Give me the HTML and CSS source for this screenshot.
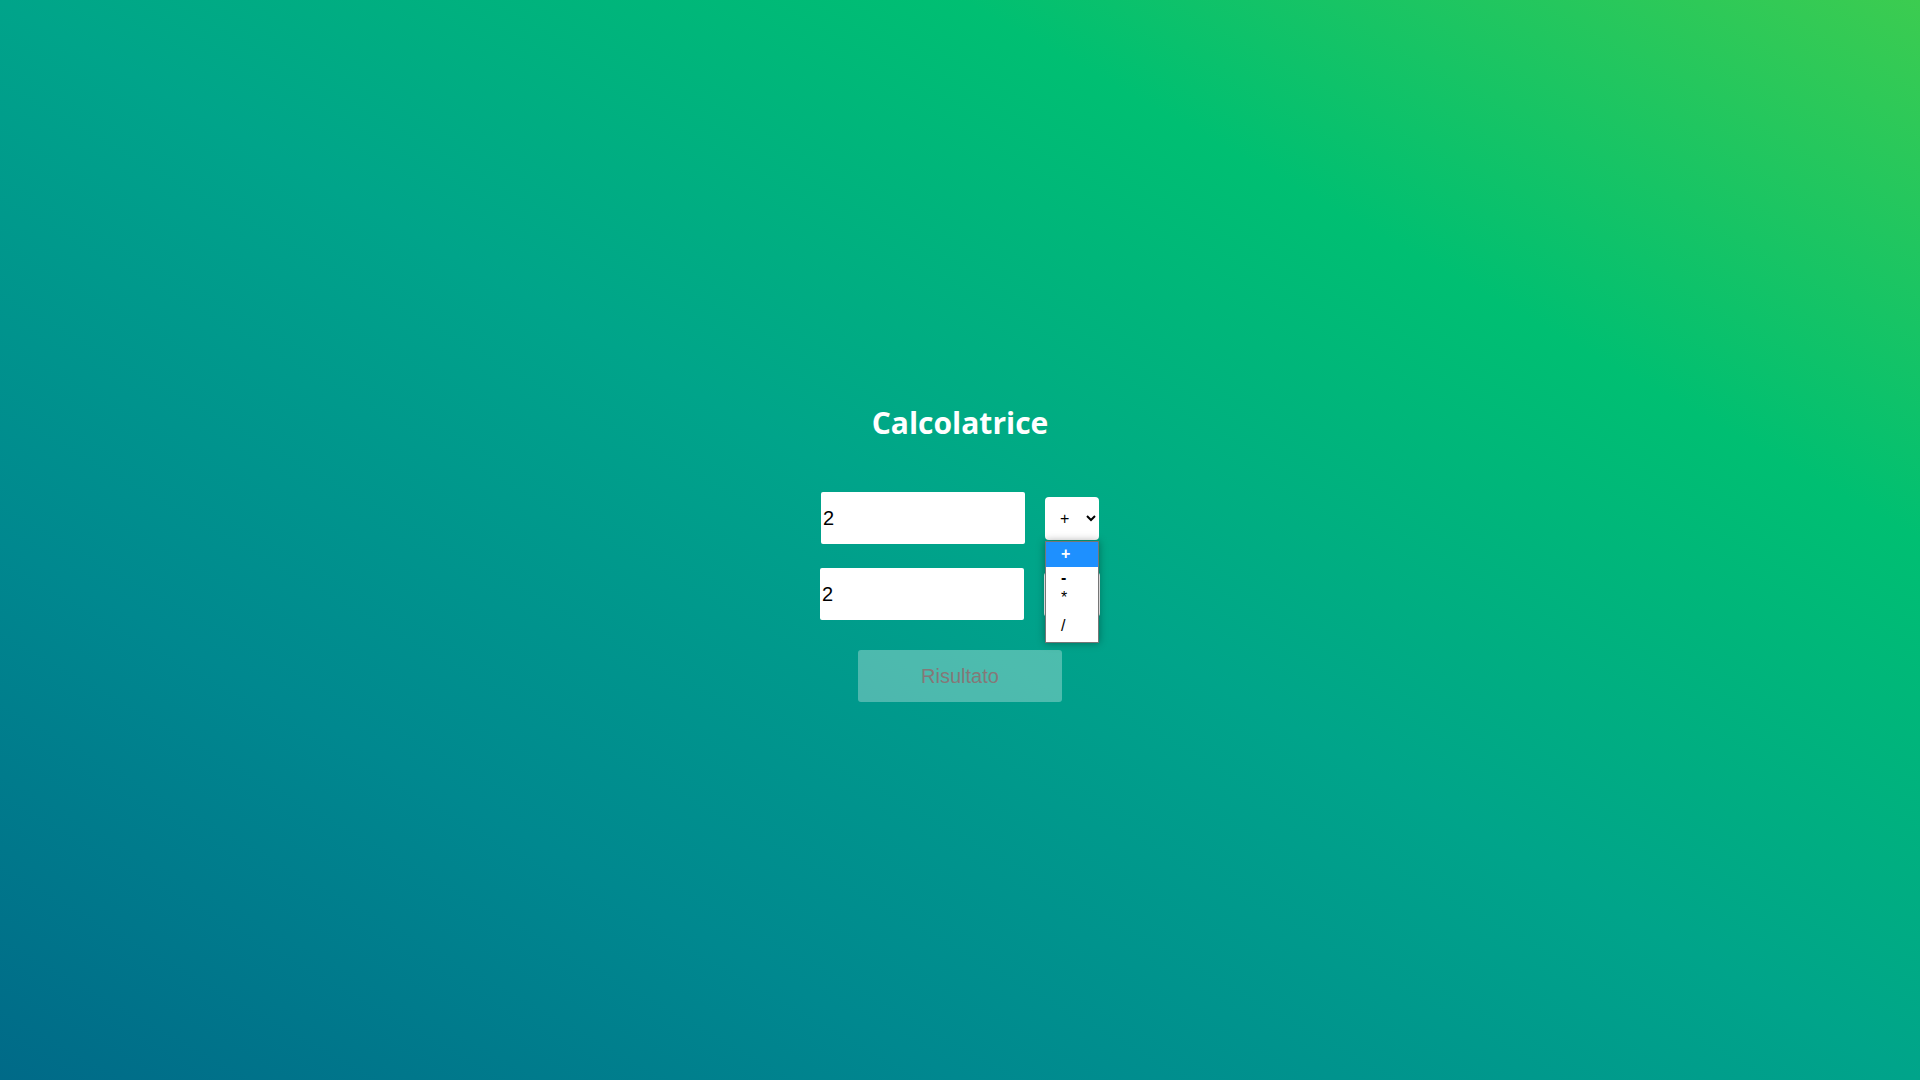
FILE: index.html
```html
<!DOCTYPE html>
<html lang="it">
<head>
<meta charset="utf-8">
<title>Calcolatrice</title>
<link rel="stylesheet" href="styles.css">
</head>
<body>
<main class="calc">
  <h1 class="title">Calcolatrice</h1>
  <form class="form">
    <div class="row">
      <input class="num" type="text" value="2">
      <div class="select-wrap">
        <select class="op">
          <option>+</option>
          <option>-</option>
          <option>*</option>
          <option>/</option>
        </select>
        <ul class="dropdown">
          <li class="opt opt-1 active">+</li>
          <li class="opt opt-2">-</li>
          <li class="opt opt-3">*</li>
          <li class="opt opt-4">/</li>
        </ul>
      </div>
    </div>
    <div class="row">
      <input class="num" type="text" value="2">
      <div class="select-wrap">
        <select class="op op-tall">
          <option>+</option>
          <option>-</option>
          <option>*</option>
          <option>/</option>
        </select>
      </div>
    </div>
    <button class="btn" type="button">Risultato</button>
  </form>
</main>
</body>
</html>
```
FILE: styles.css
```css
html, body {
  height: 100%;
}
body {
  margin: 0;
  background: linear-gradient(to right top, #006a88 0%, #00888f 25%, #00a48a 50%, #00bf72 75%, #3ccc50 100%);
  font-family: Arial, "Liberation Sans", sans-serif;
}
.calc {
  display: flex;
  flex-direction: column;
  align-items: center;
  padding-top: 403px;
}
.title {
  margin: 0;
  font-family: "Open Sans", "Noto Sans", sans-serif;
  font-weight: 700;
  font-size: 30px;
  line-height: 40px;
  color: #ffffff;
}
.form {
  margin-top: 49px;
  display: flex;
  flex-direction: column;
  align-items: center;
}
.row {
  display: flex;
  align-items: center;
  gap: 20px;
  margin-bottom: 24px;
}
.row:nth-child(2) {
  margin-bottom: 30px;
}
.num {
  box-sizing: border-box;
  width: 204px;
  height: 52px;
  border: none;
  border-radius: 2px;
  padding: 0 2px;
  background: #ffffff;
  color: #000000;
  font-family: Arial, "Liberation Sans", sans-serif;
  font-size: 20px;
  outline: none;
}
.select-wrap {
  position: relative;
  display: flex;
}
.op {
  box-sizing: border-box;
  width: 54px;
  height: 43px;
  border: none;
  border-radius: 4px;
  background: #ffffff;
  color: #000000;
  font-family: Arial, "Liberation Sans", sans-serif;
  font-size: 16px;
  padding: 0 0 0 11px;
  outline: none;
}
.op-tall {
  width: 56px;
  height: 45px;
}
.dropdown {
  position: absolute;
  top: 44px;
  left: 0;
  z-index: 5;
  box-sizing: border-box;
  width: 54px;
  height: 102px;
  margin: 0;
  padding: 0;
  list-style: none;
  background: #ffffff;
  border: 1px solid #767676;
  box-shadow: 0 0 8px rgba(0, 0, 0, 0.35);
  font-family: Arial, "Liberation Sans", sans-serif;
  font-size: 16px;
  color: #000000;
}
.opt {
  display: flex;
  align-items: center;
  padding-left: 15px;
}
.opt-1 { height: 25px; }
.opt-2 { height: 22px; font-weight: 700; }
.opt-3 { height: 18px; }
.opt-4 { height: 35px; padding-top: 3px; box-sizing: border-box; }
.opt.active {
  background: #1e90ff;
  color: #ffffff;
  font-weight: 700;
}
.btn {
  width: 204px;
  height: 52px;
  border: none;
  border-radius: 3px;
  background: rgba(255, 255, 255, 0.3);
  color: #857878;
  font-family: Arial, "Liberation Sans", sans-serif;
  font-size: 20px;
}
```
